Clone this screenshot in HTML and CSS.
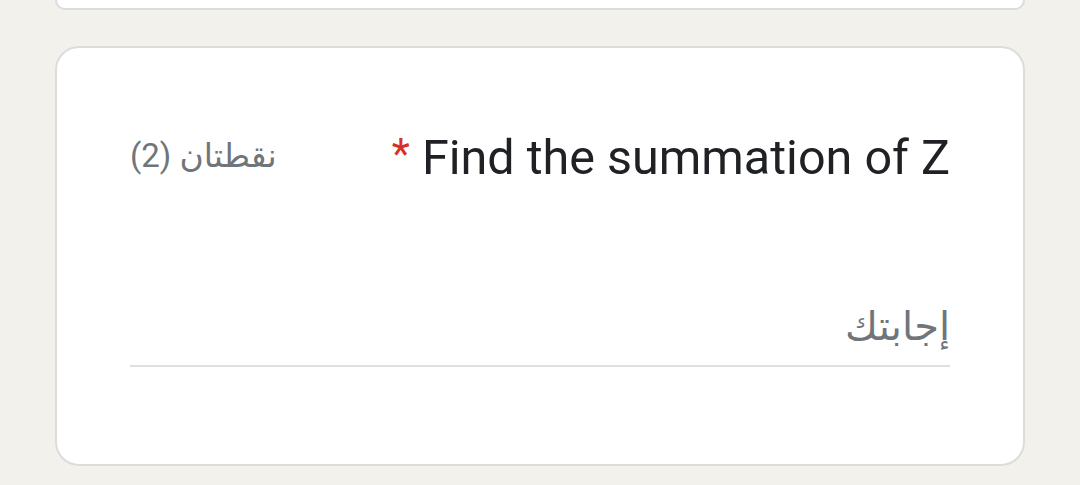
FILE: index.html
```html
<!DOCTYPE html>
<html lang="ar" dir="rtl">
<head>
<meta charset="utf-8">
<link rel="stylesheet" href="styles.css">
</head>
<body>
<div class="page">
  <div class="card card-prev"></div>
  <div class="card question">
    <div class="header">
      <div class="title" dir="ltr"><span class="req">*</span> Find the summation of Z</div>
      <div class="points">نقطتان (2)</div>
    </div>
    <div class="answer">
      <div class="placeholder">إجابتك</div>
    </div>
  </div>
</div>
</body>
</html>
```
FILE: styles.css
```css
html, body {
  margin: 0;
  padding: 0;
}
body {
  background: #f2f1ec;
  width: 1080px;
  height: 485px;
  overflow: hidden;
  font-family: Roboto, "DejaVu Sans", sans-serif;
}
.page {
  display: flex;
  flex-direction: column;
  gap: 36px;
  padding: 0 55px;
}
.card {
  background: #ffffff;
  border: 2px solid #dcdcdc;
  border-radius: 24px;
}
.card-prev {
  height: 8px;
  border-top: none;
  border-top-left-radius: 0;
  border-top-right-radius: 0;
}
.question {
  padding: 76px 73px 97px 73px;
  display: flex;
  flex-direction: column;
}
.header {
  display: flex;
  justify-content: space-between;
  align-items: center;
}
.title {
  font-size: 48.5px;
  line-height: 60px;
  color: #202124;
  letter-spacing: 0;
}
.req {
  color: #d93025;
  font-size: 42px;
  vertical-align: 6px;
}
.points {
  font-size: 33px;
  color: #70757a;
  line-height: 60px;
}
.answer {
  margin-top: 109px;
  border-bottom: 2px solid #e0e0e0;
  padding-bottom: 8px;
}
.placeholder {
  font-size: 40px;
  line-height: 60px;
  color: #70757a;
  text-align: right;
}
```
